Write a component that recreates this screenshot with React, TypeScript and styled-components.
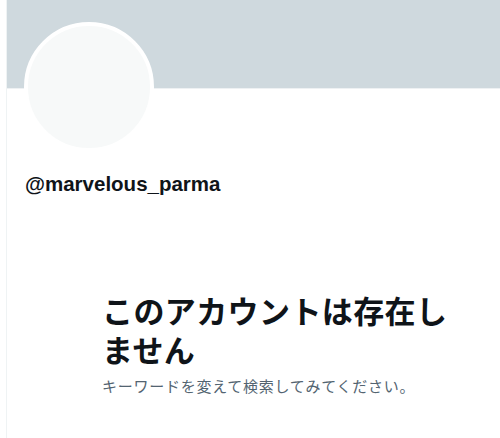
import { FC } from 'react';
import styled, { createGlobalStyle } from 'styled-components';

const GlobalStyle = createGlobalStyle`
  html,
  body {
    margin: 0;
    padding: 0;
    background: #ffffff;
  }

  body {
    font-family: 'Liberation Sans', 'Noto Sans CJK JP', sans-serif;
    color: #0f1419;
  }
`;

const Column = styled.main`
  margin-left: 6px;
  min-height: 438px;
  border-left: 1px solid #eff3f4;
  box-sizing: border-box;
`;

const Banner = styled.div`
  height: 89px;
  background: #cfd9de;
  border-bottom: 1px solid #eef1f3;
  box-sizing: border-box;
`;

const ProfileHeader = styled.section`
  display: flex;
  flex-direction: column;
  align-items: flex-start;
  padding-left: 17px;
`;

const Avatar = styled.div`
  width: 130px;
  height: 130px;
  margin-top: -67px;
  border-radius: 50%;
  border: 4px solid #ffffff;
  background: #f7f9f9;
  box-sizing: border-box;
`;

const Handle = styled.h2`
  margin: 20px 0 0 1px;
  font-family: 'Liberation Sans', Arial, sans-serif;
  font-size: 20.5px;
  line-height: 24px;
  font-weight: 700;
  color: #0f1419;
`;

const EmptyState = styled.section`
  display: flex;
  flex-direction: column;
  padding: 94px 0 0 95px;
  max-width: 362px;
`;

const Title = styled.h1`
  margin: 0;
  font-family: 'Noto Sans CJK JP', sans-serif;
  font-size: 31px;
  line-height: 39px;
  font-weight: 700;
  letter-spacing: 0.4px;
  color: #0f1419;
`;

const Hint = styled.p`
  margin: 8px 0 0;
  font-family: 'Noto Sans CJK JP', sans-serif;
  font-size: 15px;
  line-height: 20px;
  letter-spacing: 0.75px;
  color: #536471;
`;

const App: FC = () => (
  <>
    <GlobalStyle />
    <Column>
      <Banner />
      <ProfileHeader>
        <Avatar />
        <Handle>@marvelous_parma</Handle>
      </ProfileHeader>
      <EmptyState>
        <Title>このアカウントは存在しません</Title>
        <Hint>キーワードを変えて検索してみてください。</Hint>
      </EmptyState>
    </Column>
  </>
);

export default App;
